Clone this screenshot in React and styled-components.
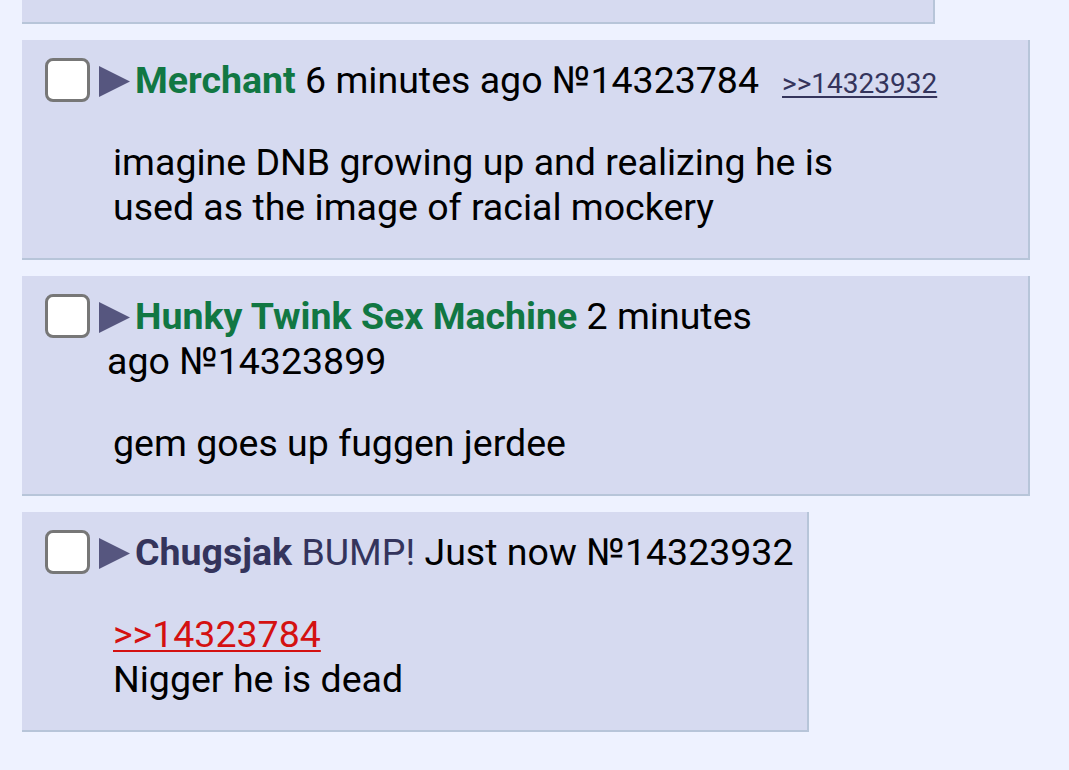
import React from "react";
import styled, { createGlobalStyle } from "styled-components";

const GlobalStyle = createGlobalStyle`
  html, body {
    margin: 0;
    padding: 0;
    background: #eef2ff;
  }
  body {
    font-family: Roboto, "Noto Sans", "Liberation Sans", sans-serif;
    color: #000;
  }
`;

const Thread = styled.div`
  display: flex;
  flex-direction: column;
  align-items: flex-start;
  gap: 16px;
  padding: 0 0 40px 22px;
`;

const Post = styled.div`
  box-sizing: border-box;
  width: fit-content;
  max-width: 1008px;
  background: #d6daf0;
  border-right: 2px solid #b7c5d9;
  border-bottom: 2px solid #b7c5d9;
  padding: 18px 13px 28px 23px;
  font-size: 37.5px;
  line-height: 45px;
`;

const CutPost = styled(Post)`
  width: ${(p) => p.$width}px;
  height: 24px;
  padding: 0;
`;

const Header = styled.div`
  display: flex;
  align-items: flex-start;
`;

const Checkbox = styled.span`
  flex: none;
  box-sizing: border-box;
  width: 45px;
  height: 44px;
  background: #fff;
  border: 3px solid #777;
  border-radius: 8px;
`;

const HeaderText = styled.div`
  margin-left: 17px;
`;

const Arrow = styled.svg`
  width: 31px;
  height: 31px;
  margin-left: -8px;
  margin-right: 5px;
  vertical-align: -4px;
`;

const Name = styled.span`
  font-weight: 700;
  color: ${(p) => p.$color};
`;

const Subject = styled.span`
  color: #34345c;
`;

const NoWrap = styled.span`
  white-space: nowrap;
`;

const BackLink = styled.a`
  margin-left: 23px;
  font-size: 28px;
  line-height: 1;
  color: #34345c;
  text-decoration: underline;
  text-underline-offset: 3px;
`;

const Body = styled.div`
  margin: 37px 130px 0 68px;
`;

const QuoteLink = styled.a`
  color: #d41111;
  text-decoration: underline;
  text-decoration-thickness: 2px;
  text-underline-offset: 3px;
`;

const PostArrow = () => (
  <Arrow viewBox="0 0 31 31">
    <path d="M0 0 L31 15.5 L0 31 Z" fill="#56567f" />
  </Arrow>
);

const posts = [
  {
    name: "Merchant",
    color: "#117743",
    before: "6 minutes",
    after: "ago №14323784",
    backlink: ">>14323932",
    body: "imagine DNB growing up and realizing he is used as the image of racial mockery",
  },
  {
    name: "Hunky Twink Sex Machine",
    color: "#117743",
    before: "2 minutes",
    after: "ago №14323899",
    body: "gem goes up fuggen jerdee",
  },
  {
    name: "Chugsjak",
    color: "#34345c",
    subject: "BUMP!",
    before: "Just now",
    after: "№14323932",
    quote: ">>14323784",
    body: "Nigger he is dead",
  },
];

export default function App() {
  return (
    <>
      <GlobalStyle />
      <Thread>
        <CutPost $width={913} />
        {posts.map((p) => (
          <Post key={p.after}>
            <Header>
              <Checkbox />
              <HeaderText>
                <PostArrow />
                <Name $color={p.color}>{p.name}</Name>{" "}
                {p.subject && (
                  <>
                    <Subject>{p.subject}</Subject>{" "}
                  </>
                )}
                {p.before} <NoWrap>{p.after}</NoWrap>
                {p.backlink && <BackLink href="#">{p.backlink}</BackLink>}
              </HeaderText>
            </Header>
            <Body>
              {p.quote && (
                <>
                  <QuoteLink href="#">{p.quote}</QuoteLink>
                  <br />
                </>
              )}
              {p.body}
            </Body>
          </Post>
        ))}
      </Thread>
    </>
  );
}
